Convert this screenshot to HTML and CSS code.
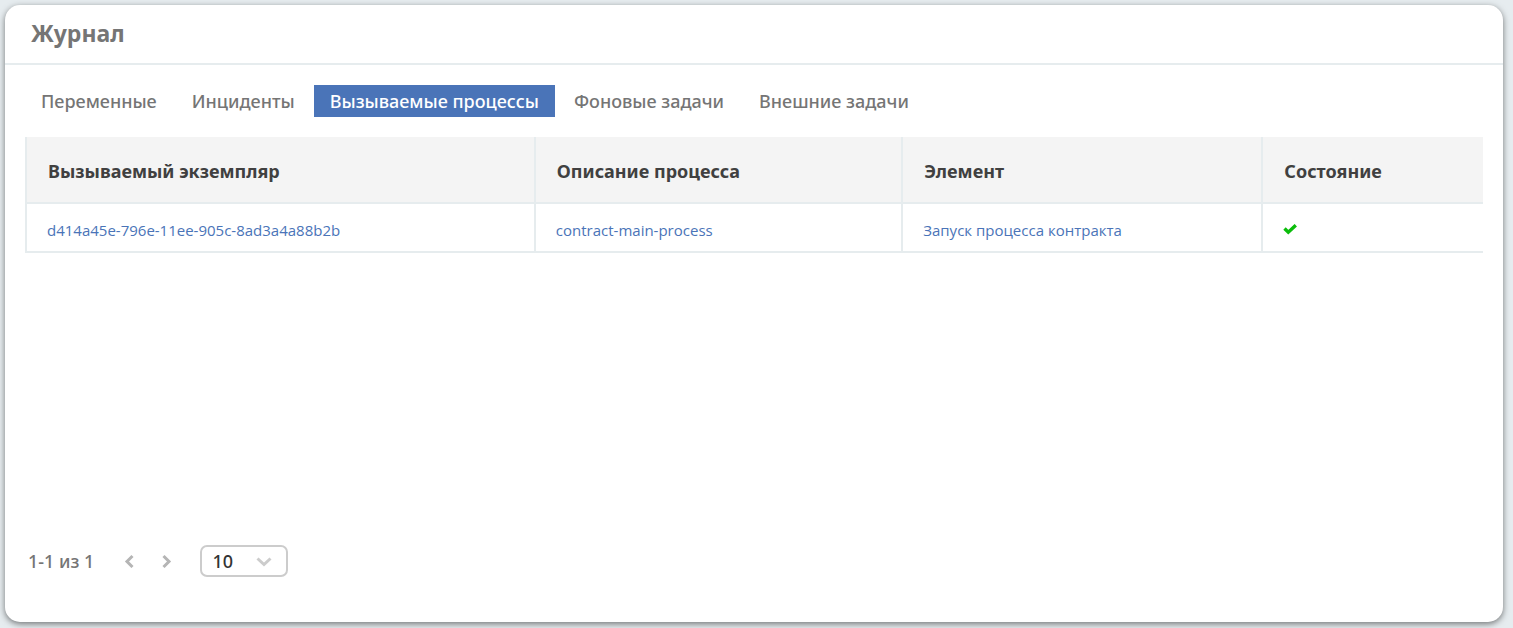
FILE: index.html
```html
<!DOCTYPE html>
<html lang="ru">
<head>
    <meta charset="UTF-8">
    <meta name="viewport" content="width=device-width, initial-scale=1.0">
    <title>Журнал</title>
    <link rel="stylesheet" href="styles.css">
</head>
<body>
<main class="card">
    <header class="card_header">
        <h1>Журнал</h1>
    </header>
    <div class="card_body">
        <nav class="tabs">
            <button type="button" class="tab">Переменные</button>
            <button type="button" class="tab">Инциденты</button>
            <button type="button" class="tab active">Вызываемые процессы</button>
            <button type="button" class="tab">Фоновые задачи</button>
            <button type="button" class="tab">Внешние задачи</button>
        </nav>
        <table class="journal">
            <thead>
                <tr>
                    <th class="col_instance">Вызываемый экземпляр</th>
                    <th class="col_process">Описание процесса</th>
                    <th class="col_element">Элемент</th>
                    <th>Состояние</th>
                </tr>
            </thead>
            <tbody>
                <tr>
                    <td><a href="#">d414a45e-796e-11ee-905c-8ad3a4a88b2b</a></td>
                    <td><a href="#">contract-main-process</a></td>
                    <td><a href="#">Запуск процесса контракта</a></td>
                    <td>
                        <svg class="check" viewBox="0 0 14 11" role="img" aria-label="Завершён">
                            <path d="M1.5 4.5 L5.3 8.2 L12.8 1.2" fill="none" stroke="#0bbd0b" stroke-width="3.4"/>
                        </svg>
                    </td>
                </tr>
            </tbody>
        </table>
        <div class="pagination">
            <span class="range">1-1 из 1</span>
            <button type="button" class="page_btn" aria-label="Назад">
                <svg viewBox="0 0 10 14"><path d="M8.5 2 L3 7.5 L8.5 13"/></svg>
            </button>
            <button type="button" class="page_btn" aria-label="Вперёд">
                <svg viewBox="0 0 10 14"><path d="M1.5 2 L7 7.5 L1.5 13"/></svg>
            </button>
            <div class="page_size">
                <select aria-label="Записей на странице">
                    <option>10</option>
                    <option>20</option>
                    <option>50</option>
                </select>
                <svg class="arrow" viewBox="0 0 16 10"><path d="M1.5 1.5 L8 7.5 L14.5 1.5"/></svg>
            </div>
        </div>
    </div>
</main>
</body>
</html>
```
FILE: styles.css
```css
:root {
    --bg-color: #e6ecef;
    --line-color: #e6ecee;
    --head-color: #f4f4f4;
    --txt-color: #757575;
    --dark-color: #404040;
    --accent-color: #4a74b8;
    --icon-color: #b5b5b5;
}

* {
    margin: 0;
    padding: 0;
    box-sizing: border-box;
    font-family: "Noto Sans", "Open Sans", sans-serif;
}

body {
    display: flex;
    min-height: 100vh;
    padding: 5px 10px 6px 5px;
    background-color: var(--bg-color);
    color: var(--txt-color);
}

.card {
    display: flex;
    flex-direction: column;
    flex: 1;
    background-color: #ffffff;
    border-radius: 15px;
    box-shadow: 0 2px 6px rgba(0, 0, 0, 0.5);
}

.card_header {
    padding: 11px 26px 13px;
    border-bottom: 2px solid var(--line-color);
}

.card_header h1 {
    font-size: 23px;
    line-height: 34px;
    font-weight: 700;
}

.card_body {
    display: flex;
    flex-direction: column;
    flex: 1;
    padding: 20px 20px 45px;
}

.tabs {
    display: flex;
    gap: 3px;
    margin-bottom: 20px;
}

.tab {
    padding: 0 16px;
    border: none;
    background: none;
    color: var(--txt-color);
    font-size: 18px;
    line-height: 32px;
    font-weight: 500;
    cursor: pointer;
}

.tab.active {
    background-color: var(--accent-color);
    color: #ffffff;
}

.journal {
    width: 100%;
    table-layout: fixed;
    border-spacing: 0;
}

.journal th,
.journal td {
    border-left: 2px solid var(--line-color);
    border-bottom: 2px solid var(--line-color);
    text-align: left;
}

.journal th {
    height: 67px;
    padding: 2px 21px 0;
    background-color: var(--head-color);
    color: var(--dark-color);
    font-size: 18px;
    font-weight: 700;
}

.journal td {
    height: 49px;
    padding: 4px 20px 0;
    font-size: 15px;
}

.journal a {
    color: var(--accent-color);
    font-family: "Open Sans", sans-serif;
    text-decoration: none;
}

.col_instance {
    width: 34.9%;
}

.col_process {
    width: 25.2%;
}

.col_element {
    width: 24.7%;
}

.check {
    display: block;
    width: 14px;
    height: 11px;
}

.pagination {
    display: flex;
    align-items: center;
    margin-top: auto;
    padding-left: 3px;
    font-size: 18px;
    font-weight: 500;
}

.range {
    margin-right: 20px;
}

.page_btn {
    display: flex;
    justify-content: center;
    width: 30px;
    margin-right: 8px;
    border: none;
    background: none;
    cursor: pointer;
}

.page_btn svg {
    width: 10px;
    height: 14px;
}

.page_btn path,
.arrow path {
    fill: none;
    stroke: var(--icon-color);
    stroke-width: 3;
}

.page_size {
    position: relative;
    margin-left: 10px;
}

.page_size select {
    width: 88px;
    height: 32px;
    padding-left: 10px;
    appearance: none;
    border: 2px solid #cccccc;
    border-radius: 7px;
    background-color: #ffffff;
    color: #333333;
    font-size: 18px;
    font-weight: 500;
}

.arrow {
    position: absolute;
    top: 12px;
    right: 16px;
    width: 16px;
    height: 10px;
    pointer-events: none;
}

.arrow path {
    stroke: #cccccc;
}
```
